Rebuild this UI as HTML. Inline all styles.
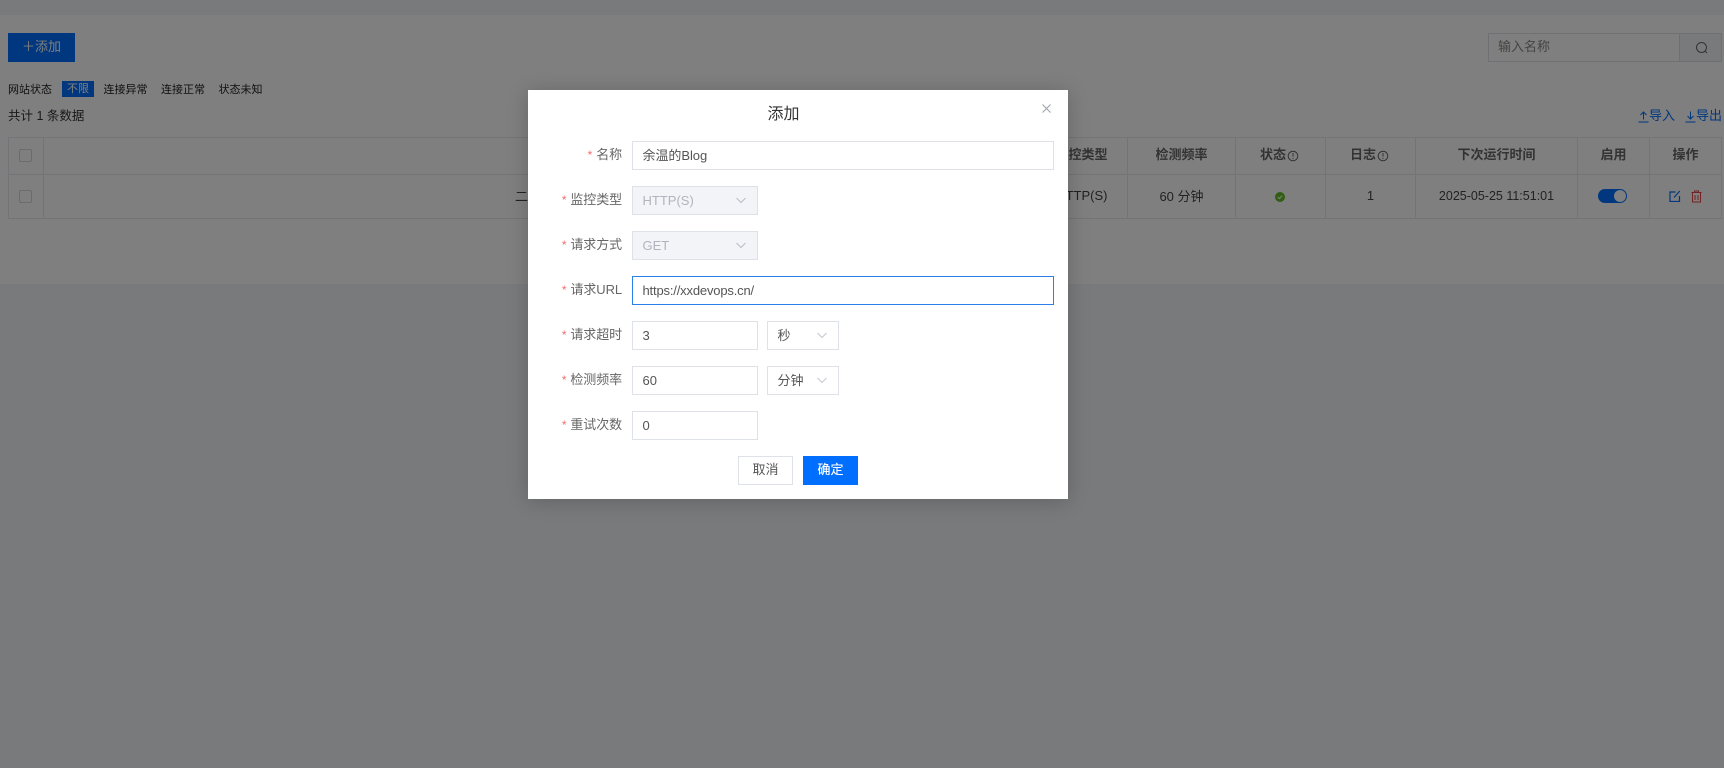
<!DOCTYPE html>
<html lang="zh-CN">
<head>
<meta charset="utf-8">
<title>添加</title>
<style>
html,body{margin:0;padding:0;width:1724px;height:768px;overflow:hidden;background:#f3f5f8;}
body{position:relative;font-family:"Liberation Sans","Noto Sans CJK SC",sans-serif;font-size:13px;color:#444;}
.a{position:absolute;white-space:nowrap;box-sizing:border-box;}
.t{line-height:20px;height:20px;}
.c{text-align:center;}
.line{position:absolute;background:#e6e9ee;}
.th{font-weight:bold;color:#666;}
.overlay{position:absolute;left:0;top:0;width:1724px;height:768px;background:rgba(0,0,0,.5);}
.dialog{position:absolute;left:528px;top:90px;width:540px;height:409px;background:#fff;box-shadow:0 2px 20px rgba(0,0,0,.2);}
.lb{position:absolute;right:446px;width:90px;text-align:right;line-height:20px;height:20px;color:#666;white-space:nowrap;letter-spacing:-.1px;}
.lb i{font-style:normal;color:#f56c6c;margin-right:4px;font-size:12px;}
.inp{position:absolute;left:104px;height:29px;box-sizing:border-box;border:1px solid #dfe1e8;padding-left:9.5px;line-height:27px;color:#555;background:#fff;white-space:nowrap;}
.dis{background:#f3f4f7;color:#b0b4be;}
svg{position:absolute;display:block;}
</style>
</head>
<body>
<!-- page -->
<div class="a" style="left:0;top:15px;width:1724px;height:269px;background:#fff;"></div>
<div class="a c" style="left:8px;top:33px;width:67px;height:29px;background:#006eff;color:#fff;line-height:28px;font-size:13px;">＋添加</div>

<div class="a t" style="left:8px;top:80px;font-size:11px;color:#222;">网站状态</div>
<div class="a c" style="left:62px;top:81px;width:32px;height:16px;background:#006eff;color:#fff;font-size:11px;line-height:17px;">不限</div>
<div class="a t" style="left:103.500px;top:80px;font-size:11px;color:#222;">连接异常</div>
<div class="a t" style="left:161px;top:80px;font-size:11px;color:#222;">连接正常</div>
<div class="a t" style="left:218.500px;top:80px;font-size:11px;color:#222;">状态未知</div>
<div class="a t" style="left:8px;top:106px;font-size:12.500px;color:#333;">共计 1 条数据</div>

<div class="a" style="left:1488px;top:33px;width:234px;height:29px;border:1px solid #dfe1e8;"></div>
<div class="a" style="left:1679px;top:33px;width:43px;height:29px;border:1px solid #dfe1e8;background:#f3f5f8;"></div>
<div class="a t" style="left:1498px;top:37px;color:#888;">输入名称</div>
<svg style="left:1695px;top:41px" width="14" height="14" viewBox="0 0 14 14" fill="none" stroke="#666" stroke-width="1"><circle cx="6.500" cy="6.500" r="5"/><path d="M10 10l2 2"/></svg>

<svg style="left:1638px;top:110px" width="11" height="13" viewBox="0 0 11 13" fill="none" stroke="#006eff" stroke-width="1"><path d="M5.500 9.500V2M2.500 5l3-3 3 3M0.500 12h10"/></svg>
<div class="a t" style="left:1649px;top:106px;color:#006eff;">导入</div>
<svg style="left:1685px;top:110px" width="11" height="13" viewBox="0 0 11 13" fill="none" stroke="#006eff" stroke-width="1"><path d="M5.500 1.500V9M2.500 6l3 3 3-3M0.500 12h10"/></svg>
<div class="a t" style="left:1696px;top:106px;color:#006eff;">导出</div>

<!-- table lines -->
<div class="line" style="left:8px;top:137px;width:1714px;height:1px;"></div>
<div class="line" style="left:8px;top:174px;width:1714px;height:1px;"></div>
<div class="line" style="left:8px;top:218px;width:1714px;height:1px;"></div>
<div class="line" style="left:8px;top:137px;width:1px;height:82px;"></div>
<div class="line" style="left:43px;top:137px;width:1px;height:82px;"></div>
<div class="line" style="left:1127px;top:137px;width:1px;height:82px;"></div>
<div class="line" style="left:1235px;top:137px;width:1px;height:82px;"></div>
<div class="line" style="left:1325px;top:137px;width:1px;height:82px;"></div>
<div class="line" style="left:1415px;top:137px;width:1px;height:82px;"></div>
<div class="line" style="left:1577px;top:137px;width:1px;height:82px;"></div>
<div class="line" style="left:1649px;top:137px;width:1px;height:82px;"></div>
<div class="line" style="left:1721px;top:137px;width:1px;height:82px;"></div>

<div class="a" style="left:19px;top:149px;width:13px;height:13px;border:1px solid #d5d7dc;border-radius:2px;background:#fff;"></div>
<div class="a" style="left:19px;top:190px;width:13px;height:13px;border:1px solid #d5d7dc;border-radius:2px;background:#fff;"></div>

<div class="a t th" style="right:616.500px;top:145px;">监控类型</div>
<div class="a t th c" style="left:1128px;width:107px;top:145px;">检测频率</div>
<div class="a t th" style="left:1260px;top:145px;">状态</div>
<svg style="left:1287px;top:150px" width="12" height="12" viewBox="0 0 12 12" fill="none" stroke="#666"><circle cx="6" cy="6" r="4.800"/><path d="M6 3v3.600M6 8v1"/></svg>
<div class="a t th" style="left:1350px;top:145px;">日志</div>
<svg style="left:1377px;top:150px" width="12" height="12" viewBox="0 0 12 12" fill="none" stroke="#666"><circle cx="6" cy="6" r="4.800"/><path d="M6 3v3.600M6 8v1"/></svg>
<div class="a t th c" style="left:1416px;width:161px;top:145px;">下次运行时间</div>
<div class="a t th c" style="left:1578px;width:71px;top:145px;">启用</div>
<div class="a t th c" style="left:1650px;width:71px;top:145px;">操作</div>

<div class="a t" style="left:515px;top:187px;">二级</div>
<div class="a t" style="right:616.500px;top:186px;">HTTP(S)</div>
<div class="a t c" style="left:1128px;width:107px;top:187px;">60 分钟</div>
<svg style="left:1275px;top:192px" width="10" height="10" viewBox="0 0 10 10"><circle cx="5" cy="5" r="5" fill="#62bc24"/><path d="M2.800 5l1.600 1.600 2.800-3" fill="none" stroke="#fff" stroke-width="1"/></svg>
<div class="a t c" style="left:1326px;width:89px;top:186px;">1</div>
<div class="a t c" style="left:1416px;width:161px;top:186px;font-size:12.500px;">2025-05-25 11:51:01</div>
<div class="a" style="left:1598px;top:189px;width:29px;height:14px;border-radius:7px;background:#006eff;"></div>
<div class="a" style="left:1614px;top:190px;width:12px;height:12px;border-radius:6px;background:#fff;"></div>
<svg style="left:1669px;top:190px" width="12" height="12" viewBox="0 0 12 12" fill="none" stroke="#006eff" stroke-width="1.200"><path d="M6.500 2H1v9.500h9.500V6M5 7.500L10.800 1"/></svg>
<svg style="left:1691px;top:190px" width="11" height="13" viewBox="0 0 11 13" fill="none" stroke="#e54545" stroke-width="1"><path d="M0.500 2.500h10M3.500 2.500V1h4v1.500M1.500 2.500v9.500h8V2.500M4 5v5M7 5v5"/></svg>

<div class="overlay"></div>

<!-- dialog -->
<div class="dialog">
  <div class="a c" style="left:223.500px;width:64px;top:14px;height:22px;line-height:22px;font-size:16px;color:#333;">添加</div>
  <svg style="left:513.500px;top:13.500px" width="9" height="9" viewBox="0 0 9 9" fill="none" stroke="#9a9fa8" stroke-width="1"><path d="M0.500 0.500l8 8M8.500 0.500l-8 8"/></svg>

  <div class="lb" style="top:55px"><i>*</i>名称</div>
  <div class="inp" style="top:51px;width:422px;letter-spacing:-.05px;">余温的Blog</div>

  <div class="lb" style="top:100px"><i>*</i>监控类型</div>
  <div class="inp dis" style="top:96px;width:126px;">HTTP(S)</div>
  <svg style="left:208px;top:107px" width="10" height="7" viewBox="0 0 10 7" fill="none" stroke="#b8bcc6"><path d="M0.500 1l4.500 4.500L9.500 1"/></svg>

  <div class="lb" style="top:145px"><i>*</i>请求方式</div>
  <div class="inp dis" style="top:141px;width:126px;">GET</div>
  <svg style="left:208px;top:152px" width="10" height="7" viewBox="0 0 10 7" fill="none" stroke="#b8bcc6"><path d="M0.500 1l4.500 4.500L9.500 1"/></svg>

  <div class="lb" style="top:190px"><i>*</i>请求URL</div>
  <div class="inp" style="top:186px;width:422px;border-color:#2a7fe8;letter-spacing:-.17px;">https://xxdevops.cn/</div>

  <div class="lb" style="top:235px"><i>*</i>请求超时</div>
  <div class="inp" style="top:231px;width:126px;">3</div>
  <div class="inp" style="left:239px;top:231px;width:72px;">秒</div>
  <svg style="left:289px;top:242px" width="10" height="7" viewBox="0 0 10 7" fill="none" stroke="#c4c7cf"><path d="M0.500 1l4.500 4.500L9.500 1"/></svg>

  <div class="lb" style="top:280px"><i>*</i>检测频率</div>
  <div class="inp" style="top:276px;width:126px;">60</div>
  <div class="inp" style="left:239px;top:276px;width:72px;">分钟</div>
  <svg style="left:289px;top:287px" width="10" height="7" viewBox="0 0 10 7" fill="none" stroke="#c4c7cf"><path d="M0.500 1l4.500 4.500L9.500 1"/></svg>

  <div class="lb" style="top:325px"><i>*</i>重试次数</div>
  <div class="inp" style="top:321px;width:126px;">0</div>

  <div class="a c" style="left:210px;top:366px;width:55px;height:29px;border:1px solid #dfe1e8;line-height:26px;color:#555;background:#fff;">取消</div>
  <div class="a c" style="left:275px;top:366px;width:55px;height:29px;background:#006eff;line-height:27px;color:#fff;text-shadow:0 0 .4px #fff;">确定</div>
</div>
</body>
</html>
